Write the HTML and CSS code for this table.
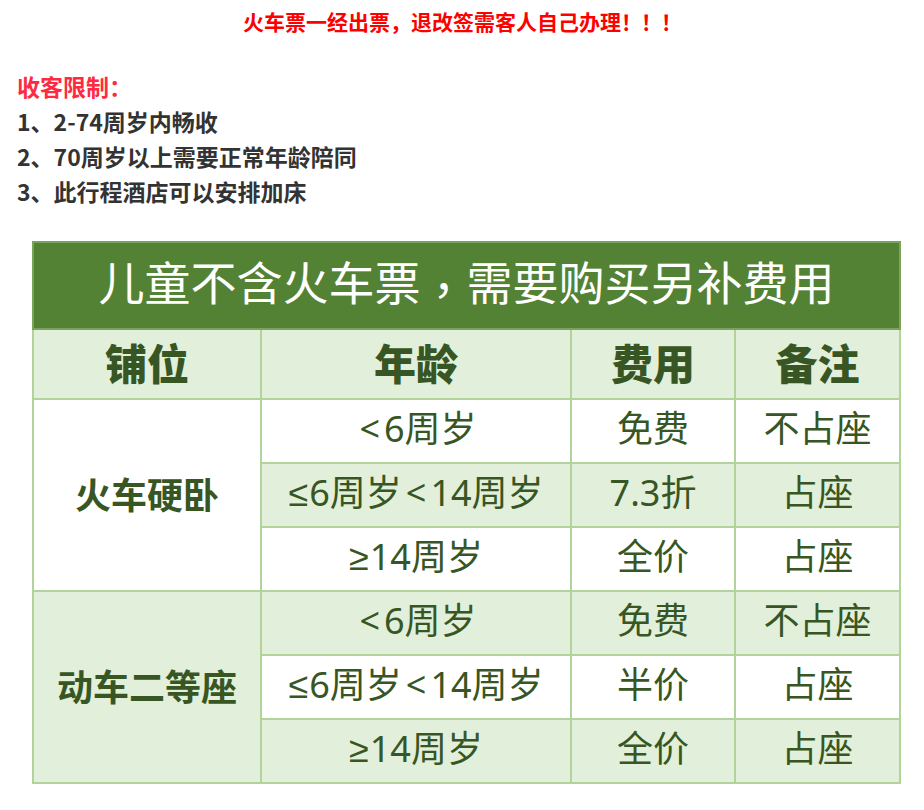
FILE: index.html
```html
<!DOCTYPE html>
<html lang="zh-CN">
<head>
<meta charset="utf-8">
<title>儿童不含火车票</title>
<link rel="stylesheet" href="styles.css">
</head>
<body>
<p class="notice">火车票一经出票，退改签需客人自己办理<span class="bang">！！！</span></p>
<div class="limits">
  <p class="limits-title">收客限制：</p>
  <p class="limit">1、2-74周岁内畅收</p>
  <p class="limit">2、70周岁以上需要正常年龄陪同</p>
  <p class="limit">3、此行程酒店可以安排加床</p>
</div>
<table class="fare">
  <colgroup>
    <col class="c1"><col class="c2"><col class="c3"><col class="c4">
  </colgroup>
  <tr class="title-row"><td colspan="4">儿童不含火车票<span class="comma" lang="zh-TW">，</span>需要购买另补费用</td></tr>
  <tr class="head-row"><th>铺位</th><th>年龄</th><th>费用</th><th>备注</th></tr>
  <tr class="row light">
    <td class="seat" rowspan="3">火车硬卧</td>
    <td><span class="lt">&lt;</span>6周岁</td><td>免费</td><td>不占座</td>
  </tr>
  <tr class="row tint"><td><span class="cmp">≤</span>6周岁<span class="lt">&lt;</span>14周岁</td><td>7.3折</td><td>占座</td></tr>
  <tr class="row light"><td><span class="cmp">≥</span>14周岁</td><td>全价</td><td>占座</td></tr>
  <tr class="row tint">
    <td class="seat" rowspan="3">动车二等座</td>
    <td><span class="lt">&lt;</span>6周岁</td><td>免费</td><td>不占座</td>
  </tr>
  <tr class="row light"><td><span class="cmp">≤</span>6周岁<span class="lt">&lt;</span>14周岁</td><td>半价</td><td>占座</td></tr>
  <tr class="row tint"><td><span class="cmp">≥</span>14周岁</td><td>全价</td><td>占座</td></tr>
</table>
</body>
</html>
```
FILE: styles.css
```css
* { box-sizing: border-box; }
html, body { margin: 0; padding: 0; background: #ffffff; }
body {
  font-family: "Noto Sans CJK SC", "Noto Sans", "Liberation Sans", sans-serif;
  width: 924px;
}
p { margin: 0; }
.notice {
  padding-top: 6px;
  text-align: center;
  font-size: 21px;
  line-height: 30px;
  font-weight: 700;
  color: #ff0000;
}
.bang { letter-spacing: -1px; }
.limits {
  padding: 33px 0 0 17px;
  font-size: 23px;
  line-height: 35px;
  font-weight: 700;
  color: #333333;
}
.limits-title { color: #ff2941; }
.fare {
  margin: 32px 0 0 32px;
  width: 867px;
  border-collapse: collapse;
  table-layout: fixed;
  color: #375623;
  text-align: center;
}
.c1 { width: 228px; }
.c2 { width: 310px; }
.c3 { width: 164px; }
.c4 { width: 165px; }
.fare td, .fare th {
  border: 2px solid #b2d49b;
  padding: 0;
  vertical-align: middle;
}
.title-row td {
  height: 87px;
  padding-bottom: 5px;
  background: #548235;
  border-color: #7aa35c;
  color: #ffffff;
  font-size: 46px;
  font-weight: 400;
  line-height: 1;
}
.comma {
  font-family: "Noto Sans CJK TC", "Noto Sans CJK SC", sans-serif;
  vertical-align: -7px;
}
.head-row th {
  height: 70px;
  padding-bottom: 5px;
  background: #e2efda;
  font-size: 42px;
  font-weight: 900;
  line-height: 1;
}
.row td {
  height: 64px;
  padding-bottom: 4px;
  font-family: "Noto Sans", "Noto Sans CJK SC", sans-serif;
  font-size: 36px;
  line-height: 1;
}
.row.light td { background: #ffffff; }
.row.tint td { background: #e2efda; }
.row td.seat {
  font-family: "Noto Sans CJK SC", sans-serif;
  font-weight: 700;
  font-size: 36px;
}
.lt { margin: 0 4px; }
.cmp { font-family: "Liberation Sans", "DejaVu Sans", sans-serif; margin-right: 1px; }
```
